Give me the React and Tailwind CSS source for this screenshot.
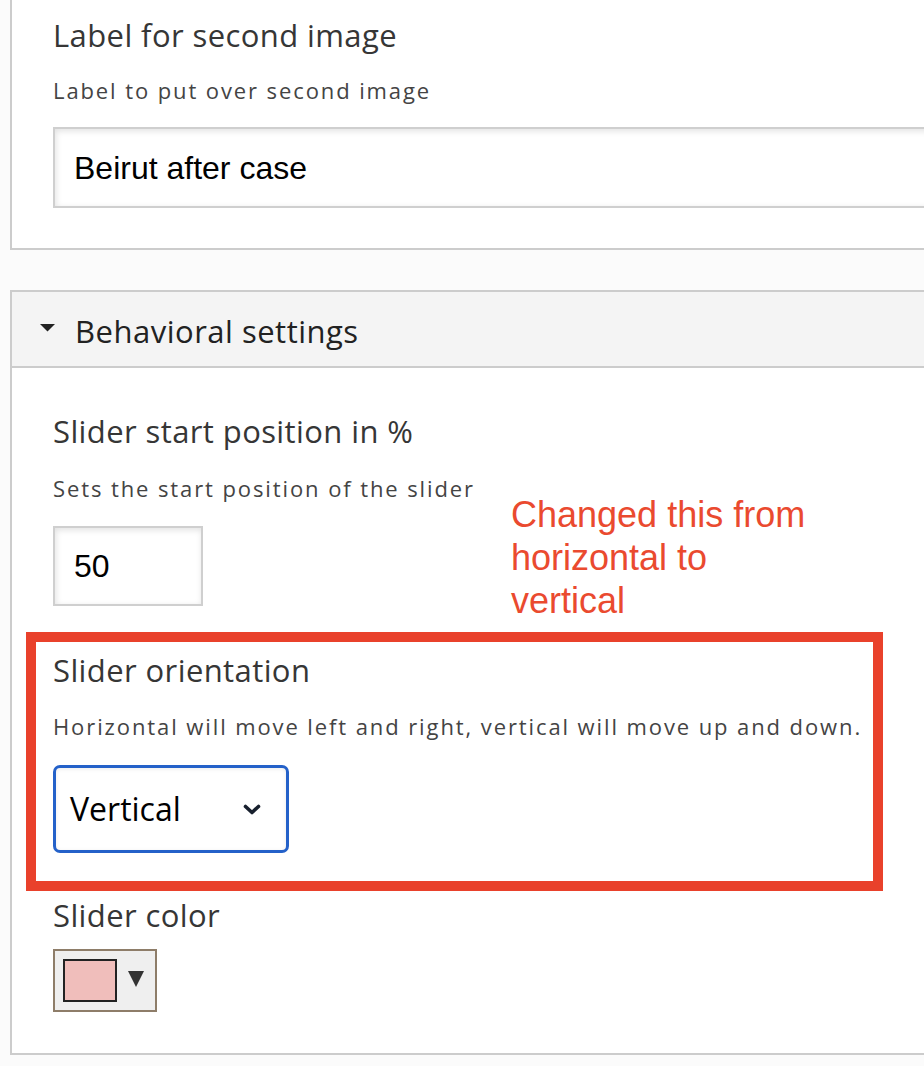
import React from "react";

const head = "font-['Open_Sans',sans-serif] text-[31px] leading-[40px] tracking-[0.4px] text-[#363636]";
const desc = "font-['Open_Sans',sans-serif] text-[22px] leading-[30px] tracking-[1.9px] text-[#444]";

export default function App() {
  return (
    <div className="w-full min-h-screen overflow-hidden bg-[#fbfbfb]">
      {/* top panel */}
      <div className="ml-[10px] w-[940px] h-[250px] border-l-2 border-b-2 border-[#cccccc] bg-white pl-[41px] pt-[15px]">
        <div className={head}>Label for second image</div>
        <div className={desc + " mt-[20px]"}>Label to put over second image</div>
        <div className="mt-[22px] h-[81px] w-[900px] border-2 border-[#cfcfcf] bg-white shadow-[inset_1px_2px_6px_rgba(0,0,0,0.12)] flex items-center pl-[19px] font-['Liberation_Sans',Arial,sans-serif] text-[32px] text-black">
          Beirut after case
        </div>
      </div>

      {/* second panel */}
      <div className="mt-[40px] ml-[10px] w-[940px] border-2 border-[#cccccc] bg-white">
        <div className="h-[76px] bg-[#f4f4f4] border-b-2 border-[#cccccc] flex items-center pl-[28px]">
          <svg width="15" height="8" viewBox="0 0 15 8" className="mr-[20px] mt-[-2px]">
            <path d="M0 0 L15 0 L7.5 7.5 Z" fill="#222" />
          </svg>
          <span className="font-['Open_Sans',sans-serif] text-[31px] leading-[40px] tracking-[0.5px] text-[#222] mt-[4px]">Behavioral settings</span>
        </div>

        <div className="relative pl-[41px] pt-[43px] pb-[41px]">
          <div className={head}>Slider start position in %</div>
          <div className={desc + " mt-[22px]"}>Sets the start position of the slider</div>
          <div className="mt-[23px] h-[80px] w-[150px] border-2 border-[#cfcfcf] bg-white shadow-[inset_1px_2px_6px_rgba(0,0,0,0.12)] flex items-center pl-[19px] font-['Liberation_Sans',Arial,sans-serif] text-[32px] text-black">
            50
          </div>

          <div className="mt-[26px] -ml-[27px] w-[857px] border-[10px] border-[#e9412b] pl-[17px] pt-[8px] pb-[28px]">
            <div className={head}>Slider orientation</div>
            <div className={desc + " mt-[21px]"}>Horizontal will move left and right, vertical will move up and down.</div>
            <div className="mt-[24px] h-[88px] w-[236px] rounded-[7px] border-[3px] border-[#2461c9] bg-white shadow-[inset_0_1px_4px_rgba(0,0,0,0.08)] flex items-center justify-between pl-[14px] pr-[25px]">
              <span className="font-['Open_Sans',sans-serif] text-[32px] text-black">Vertical</span>
              <svg width="18" height="11" viewBox="0 0 18 11">
                <path d="M2.5 2.5 L9 8.5 L15.5 2.5" fill="none" stroke="#18202e" strokeWidth="3.6" strokeLinecap="round" strokeLinejoin="round" />
              </svg>
            </div>
          </div>

          <div className={head + " mt-[4px]"}>Slider color</div>
          <div className="mt-[14px] h-[63px] w-[104px] border-2 border-[#8e7d69] bg-[#efefef] flex items-center pl-[8px]">
            <div className="h-[43px] w-[54px] border-2 border-[#222] bg-[#f0bebb]" />
            <svg width="16" height="16" viewBox="0 0 16 16" className="ml-[11px] mt-[-4px]">
              <path d="M0 0 L16 0 L8 16 Z" fill="#333" />
            </svg>
          </div>

          <div className="absolute left-[499px] top-[125px] font-['Liberation_Sans',Arial,sans-serif] text-[36px] leading-[43px] text-[#ea4a2f]">
            Changed this from
            <br />
            horizontal to
            <br />
            vertical
          </div>
        </div>
      </div>
    </div>
  );
}
